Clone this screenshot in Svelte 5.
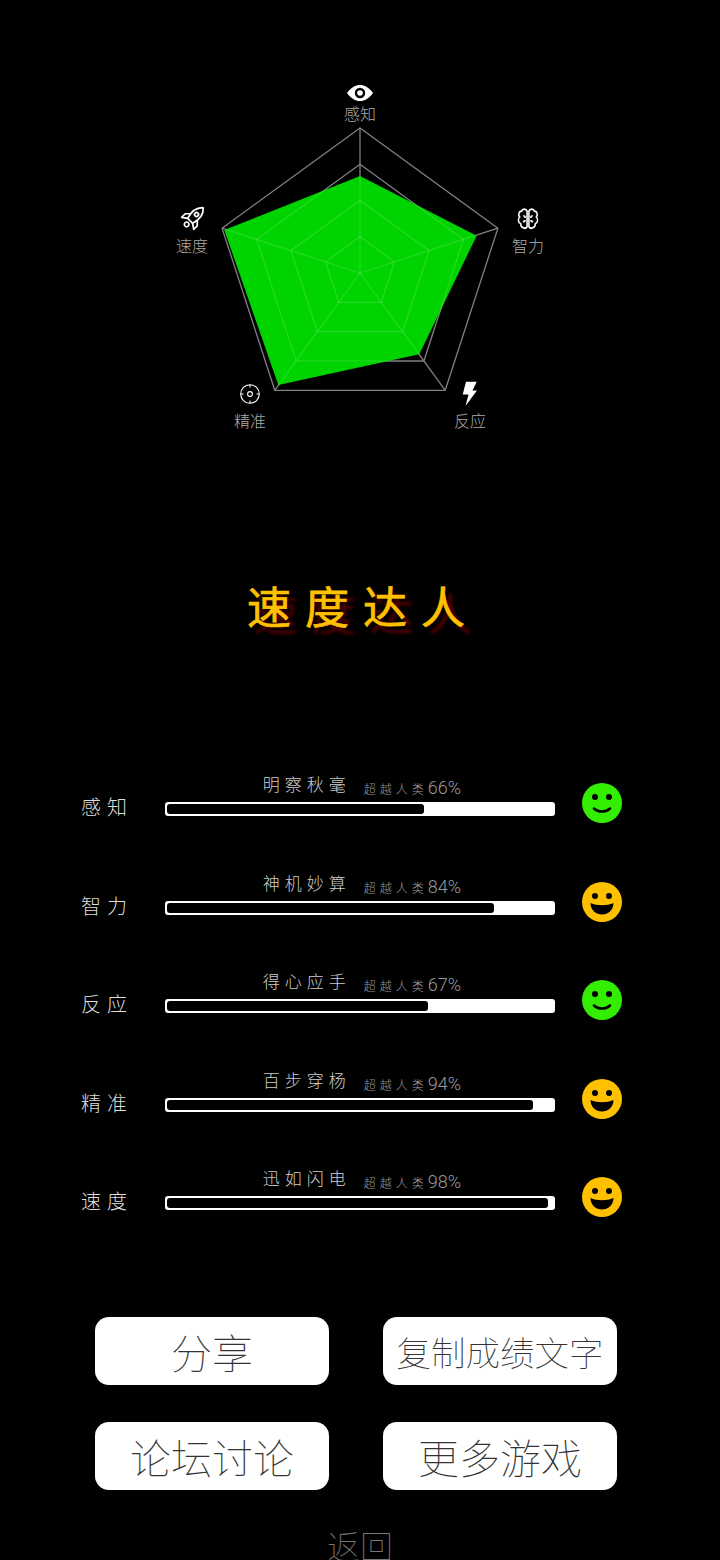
<script lang="ts">
	// radar geometry: centre + outer radius, axes clockwise from the top
	const cx = 360;
	const cy = 273;
	const outer = 145;
	const angles = [-90, -18, 54, 126, 198].map((d) => (d * Math.PI) / 180);

	function ring(r: number): string {
		return angles
			.map((a) => `${(cx + r * Math.cos(a)).toFixed(1)},${(cy + r * Math.sin(a)).toFixed(1)}`)
			.join(' ');
	}

	const rings = [36.25, 72.5, 108.75, 145];
	const spokes = angles.map((a) => ({
		x: cx + outer * Math.cos(a),
		y: cy + outer * Math.sin(a)
	}));
	const shape = '360,176 476.7,235.7 419.3,354.3 278.3,385 224.3,230';

	const stats = [
		{ label: '感知', title: '明察秋毫', pct: 66, face: 'smile' },
		{ label: '智力', title: '神机妙算', pct: 84, face: 'grin' },
		{ label: '反应', title: '得心应手', pct: 67, face: 'smile' },
		{ label: '精准', title: '百步穿杨', pct: 94, face: 'grin' },
		{ label: '速度', title: '迅如闪电', pct: 98, face: 'grin' }
	];
</script>

<main class="page">
	<svg class="radar" viewBox="0 0 720 520" width="720" height="520">
		<defs>
			<clipPath id="shape-clip"><polygon points={shape} /></clipPath>
		</defs>

		{#snippet grid(cls: string)}
			<g class={cls}>
				{#each rings as r}<polygon points={ring(r)} />{/each}
				{#each spokes as s}<line x1={cx} y1={cy} x2={s.x} y2={s.y} />{/each}
			</g>
		{/snippet}

		{@render grid('grid')}
		<polygon class="area" points={shape} />
		<g clip-path="url(#shape-clip)">{@render grid('grid-over')}</g>

		<!-- eye -->
		<g transform="translate(360 93)">
			<path class="solid" d="M-13 0C-9-5.500-4.500-8 0-8S9-5.500 13 0C9 5.500 4.500 8 0 8S-9 5.500-13 0Z" />
			<circle cx="0" cy="0" r="5.200" fill="#000" />
			<circle cx="0" cy="0" r="2.800" fill="#fff" />
		</g>
		<!-- brain -->
		<g class="outline" transform="translate(528 219) scale(0.92 1.04)">
			<path d="M-1-7.500C-2-10-6-10.500-7-7.500C-10-7.500-11-3.500-9-2C-11.500 0-10.500 4-8 4.500C-8 8-3 10.500-1 7.500Z" />
			<path d="M1-7.500C2-10 6-10.500 7-7.500C10-7.500 11-3.500 9-2C11.500 0 10.500 4 8 4.500C8 8 3 10.500 1 7.500Z" />
			<path d="M-5-3C-3.500-3-3-2-3-1M-5.500 2.500C-4 2.500-3 2-3 1M5-3C3.500-3 3-2 3-1M5.500 2.500C4 2.500 3 2 3 1" />
		</g>
		<!-- bolt -->
		<polygon class="solid" points="466,381.700 476.700,381.700 472.500,390.500 477,390.500 465.500,406 468.500,394.500 462.700,394.500" />
		<!-- target -->
		<g class="thin" transform="translate(250 394)">
			<circle cx="0" cy="0" r="9.300" />
			<circle cx="0" cy="0" r="2.400" />
			<path d="M0-9.300V-6.500M0 9.300V6.500M-9.300 0H-6.500M9.300 0H6.500" />
		</g>
		<!-- rocket -->
		<g class="outline" transform="translate(193 218) rotate(45)">
			<path d="M0-14.500C5-10 6-4 3.500 4H-3.500C-6-4-5-10 0-14.500Z" />
			<circle cx="0" cy="-5" r="2" />
			<path d="M-4.500-1.500L-8.500 2.500V7.500L-3.500 4M4.500-1.500L8.500 2.500V7.500L3.500 4" />
			<circle cx="0" cy="9" r="2.300" />
		</g>

		<text x="360" y="120">感知</text>
		<text x="528" y="252">智力</text>
		<text x="470" y="427">反应</text>
		<text x="250" y="427">精准</text>
		<text x="192" y="252">速度</text>
	</svg>

	<h1 class="rank">速度达人</h1>

	<section class="stats">
		{#each stats as s}
			<div class="stat">
				<span class="label">{s.label}</span>
				<div class="meter">
					<div class="meter-head">
						<span class="name">{s.title}</span>
						<span class="beat">超越人类<b>{s.pct}%</b></span>
					</div>
					<div class="track">
						<div class="fill" style="width: calc({s.pct}% + 1px)"></div>
					</div>
				</div>
				<svg class="face" viewBox="-20 -20 40 40" width="40" height="40">
					{#if s.face === 'smile'}
						<circle r="20" fill="#33ee00" />
						<circle cx="-7" cy="-6" r="3" />
						<circle cx="7" cy="-6" r="3" />
						<path class="smile" d="M-8 5.500C-4 9.500 4 9.500 8 5.500" />
					{:else}
						<circle r="20" fill="#ffc000" />
						<circle cx="-7" cy="-6" r="3" />
						<circle cx="7" cy="-6" r="3" />
						<path d="M-11.500 1C-5 4 5 4 11.500 1C11.500 8 6 12.500 0 12.500S-11.500 8-11.500 1Z" />
					{/if}
				</svg>
			</div>
		{/each}
	</section>

	<section class="actions">
		<button type="button">分享</button>
		<button type="button" class="long">复制成绩文字</button>
		<button type="button">论坛讨论</button>
		<button type="button">更多游戏</button>
	</section>

	<p class="back">返回</p>
</main>

<style>
	:global(body) {
		margin: 0;
		background: #000;
	}

	.page {
		width: 720px;
		height: 1560px;
		overflow: hidden;
		background: #000;
		font-family: 'Noto Sans CJK SC', 'Noto Sans', sans-serif;
		font-weight: 300;
	}

	.radar {
		display: block;
	}

	.radar text {
		fill: #aaa;
		font-size: 16px;
		text-anchor: middle;
	}

	.grid polygon,
	.grid line {
		fill: none;
		stroke: #808080;
		stroke-width: 1.3;
	}

	.grid-over polygon,
	.grid-over line {
		fill: none;
		stroke: rgba(255, 255, 255, 0.15);
		stroke-width: 1.2;
	}

	.area {
		fill: #00d400;
	}

	.solid {
		fill: #fff;
	}

	.outline * {
		fill: none;
		stroke: #fff;
		stroke-width: 1.7;
		stroke-linejoin: round;
	}

	.thin * {
		fill: none;
		stroke: #fff;
		stroke-width: 1.1;
	}

	.rank {
		margin: 53px 0 0;
		height: 64px;
		line-height: 64px;
		text-align: center;
		font-size: 44px;
		font-weight: 400;
		letter-spacing: 14px;
		text-indent: 6px;
		color: #ffc000;
		-webkit-text-stroke: 0.7px #ffc000;
		text-shadow: 7px 7px 3px #500000;
	}

	.stats {
		display: flex;
		flex-direction: column;
		gap: 50.5px;
		margin-top: 131px;
	}

	.stat {
		display: flex;
		align-items: flex-end;
		height: 48px;
	}

	.label {
		width: 84px;
		margin-left: 81px;
		line-height: 28px;
		margin-bottom: -5px;
		font-size: 20px;
		letter-spacing: 6px;
		color: #ddd;
	}

	.meter {
		width: 390px;
	}

	.meter-head {
		display: flex;
		justify-content: center;
		align-items: flex-end;
		gap: 13px;
		height: 26px;
		padding-left: 4px;
	}

	.name {
		line-height: 24px;
		margin-bottom: 6px;
		font-size: 17px;
		letter-spacing: 5px;
		color: #ccc;
	}

	.beat {
		line-height: 26px;
		font-size: 12px;
		letter-spacing: 4px;
		color: #999;
	}

	.beat b {
		font-size: 18px;
		font-weight: 300;
		letter-spacing: 0;
		font-family: Roboto, sans-serif;
	}

	.track {
		height: 14px;
		padding: 2px 0 2px 2px;
		box-sizing: border-box;
		background: #fff;
		border-radius: 3px;
	}

	.fill {
		height: 10px;
		background: #000;
		border-radius: 3px;
	}

	.face {
		display: block;
		margin-left: 27px;
		margin-bottom: -7px;
	}

	.smile {
		fill: none;
		stroke: #000;
		stroke-width: 2.500;
		stroke-linecap: round;
	}

	.actions {
		display: grid;
		grid-template-columns: 234px 234px;
		column-gap: 54px;
		row-gap: 37px;
		margin: 107px 0 0 95px;
	}

	button {
		height: 68px;
		padding: 0;
		border: 0;
		border-radius: 14px;
		background: #fff;
		color: #333;
		font-family: inherit;
		font-size: 41px;
		font-weight: 100;
	}

	button.long {
		font-size: 34.500px;
	}

	.back {
		margin: 31px 0 0;
		text-align: center;
		font-size: 33px;
		line-height: 48px;
		font-weight: 100;
		color: #777;
	}
</style>
